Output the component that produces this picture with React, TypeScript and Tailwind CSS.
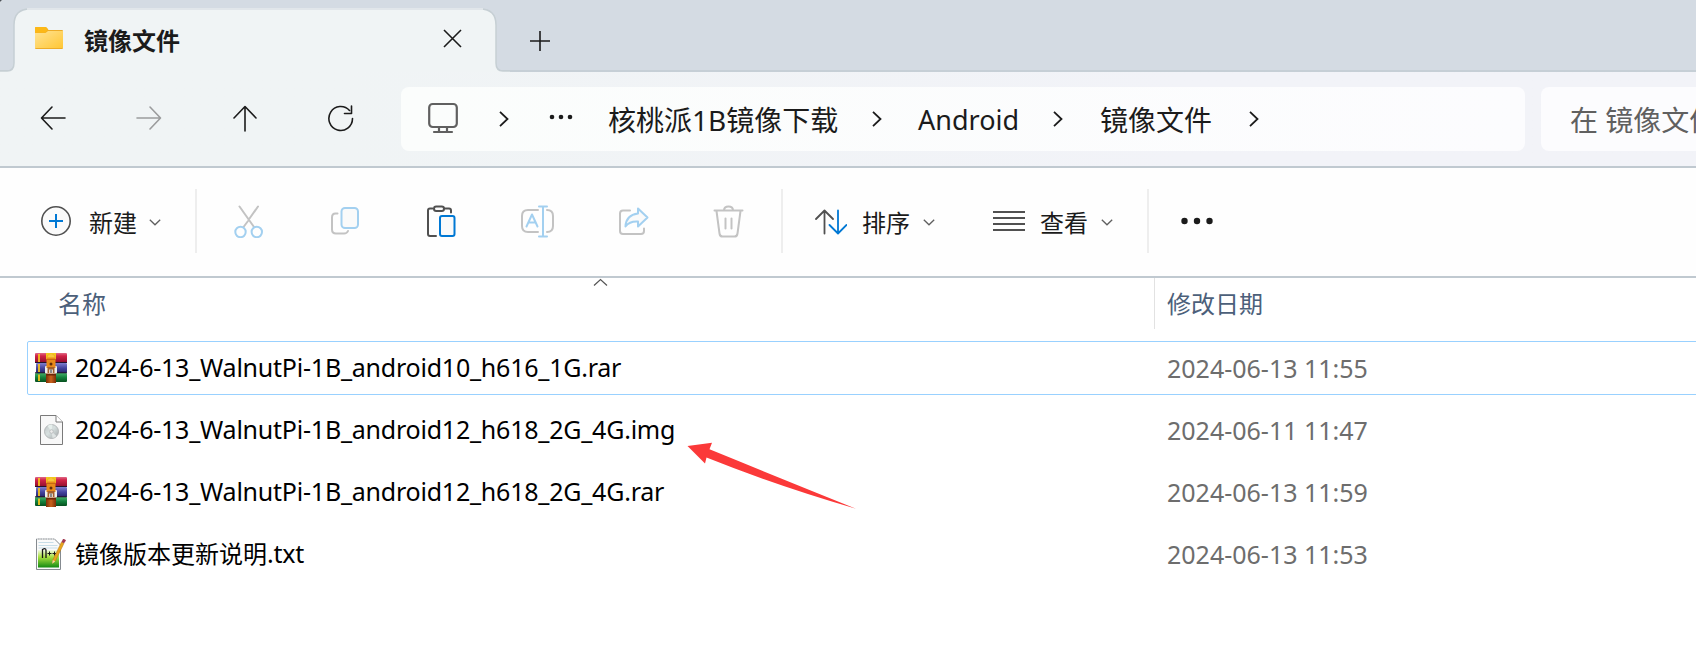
import type { ReactNode } from 'react';

const FONT = "font-['Noto_Sans','Noto_Sans_CJK_SC',sans-serif]";

type Row = { icon: 'rar' | 'img' | 'txt'; cjk?: string; name: string; date: string };

const rows: Row[] = [
  { icon: 'rar', name: '2024-6-13_WalnutPi-1B_android10_h616_1G.rar', date: '2024-06-13 11:55' },
  { icon: 'img', name: '2024-6-13_WalnutPi-1B_android12_h618_2G_4G.img', date: '2024-06-11 11:47' },
  { icon: 'rar', name: '2024-6-13_WalnutPi-1B_android12_h618_2G_4G.rar', date: '2024-06-13 11:59' },
  { icon: 'txt', cjk: '镜像版本更新说明', name: '.txt', date: '2024-06-13 11:53' },
];

function Chevron() {
  return (
    <svg className="shrink-0" width="10" height="16" viewBox="0 0 10 16" fill="none" stroke="#1b1b1b" strokeWidth="1.8">
      <path d="M1 .8 8.5 8 1 15.2" />
    </svg>
  );
}

function Down({ className }: { className: string }) {
  return (
    <svg className={className} width="12" height="7" viewBox="0 0 12 7" fill="none" stroke="#606060" strokeWidth="1.3">
      <path d="m.8.8 5.2 5 5.2-5" />
    </svg>
  );
}

function NavButton({ children, dim }: { children: ReactNode; dim?: boolean }) {
  return (
    <button className="flex h-14 w-24 shrink-0 items-center justify-center pb-0.5">
      <svg width="28" height="28" viewBox="0 0 28 28" fill="none" stroke={dim ? '#9b9c9d' : '#1b1b1b'} strokeWidth="1.6" strokeLinecap="round" strokeLinejoin="round">
        {children}
      </svg>
    </button>
  );
}

function Tool({ children }: { children: ReactNode }) {
  return (
    <button className="flex h-16 w-24 items-center justify-center pb-0.5">
      <svg width="34" height="34" viewBox="0 0 34 34" fill="none" strokeWidth="2" strokeLinecap="round" strokeLinejoin="round">
        {children}
      </svg>
    </button>
  );
}

function Divider() {
  return <div className="-mt-0.5 h-16 w-0.5 shrink-0 bg-[#eeeeee]" />;
}

function RarIcon() {
  return (
    <svg width="32" height="32" viewBox="0 0 32 32">
      <defs>
        <linearGradient id="rr" x2="0" y2="1"><stop offset="0" stopColor="#e06a86" /><stop offset=".3" stopColor="#d02348" /><stop offset="1" stopColor="#8c0c2c" /></linearGradient>
        <linearGradient id="rb" x2="0" y2="1"><stop offset="0" stopColor="#7f7fd0" /><stop offset=".5" stopColor="#4545a0" /><stop offset="1" stopColor="#25256c" /></linearGradient>
        <linearGradient id="rg" x2="0" y2="1"><stop offset="0" stopColor="#46b06a" /><stop offset=".5" stopColor="#13803c" /><stop offset="1" stopColor="#07501f" /></linearGradient>
        <linearGradient id="rs"><stop offset="0" stopColor="#7c2f08" /><stop offset=".5" stopColor="#c9621c" /><stop offset="1" stopColor="#7c2f08" /></linearGradient>
      </defs>
      <rect y="1" width="32" height="10" rx="1" fill="url(#rr)" />
      <rect x="1" y="11" width="31" height="10" rx="1" fill="url(#rb)" />
      <rect y="21" width="32" height="9" rx="1" fill="url(#rg)" />
      <path d="M0 10.500h32M0 20.800h32" stroke="#24122c" strokeWidth="1" />
      <path d="M4 2v8M4 12v8M4 22.500v6.500" stroke="#f5c21c" strokeWidth="1.800" />
      <rect x="11" y="1" width="10" height="6" fill="#f0c81c" />
      <rect x="11" y="21" width="10" height="10" fill="url(#rs)" />
      <path d="M11 22h10v1.500H11z" fill="#6c2708" />
      <rect x="10" y="14" width="12" height="7.500" rx="1" fill="#f0f0ee" />
      <path d="M11.500 16V6.500c0-6 9-6 9 0V16z" fill="#e98a1a" />
      <path d="M12 5.500q1-3.500 4-3.500t4 3.500z" fill="#f8c83a" />
      <path d="M11.500 7.500h9" stroke="#c56a10" strokeWidth="1" />
      <circle cx="16" cy="12" r="1.500" fill="#5f2c0c" />
      <path d="M12.500 15h7v6h-1.700v-3.500h-3.600V21h-1.700z" fill="#a5602c" />
      <path d="M16 17.500v3.500" stroke="#555" strokeWidth="1.300" />
    </svg>
  );
}

function ImgIcon() {
  return (
    <svg width="32" height="32" viewBox="0 0 32 32">
      <defs>
        <linearGradient id="disc" x2="1" y2="1"><stop offset="0" stopColor="#c0c4c6" /><stop offset=".45" stopColor="#d7e0df" /><stop offset="1" stopColor="#a3a7aa" /></linearGradient>
      </defs>
      <path d="M5.500 1.500h15.500l6.500 6.500v22.500h-22z" fill="#f8f8f8" stroke="#7a7a7a" />
      <path d="M21 1.500V8h6.500" fill="#fff" stroke="#7a7a7a" />
      <circle cx="16.500" cy="17.500" r="7" fill="url(#disc)" stroke="#a9adaf" strokeWidth=".8" />
      <path d="m16.500 17.500-4-5.500q3-2 5-1.300z" fill="#e6efec" />
      <path d="m16.500 17.500 5 4.500q-2 2-4 2z" fill="#dfe4e4" />
      <circle cx="16.500" cy="17.500" r="1.800" fill="#ececec" stroke="#b5b8ba" strokeWidth=".8" />
    </svg>
  );
}

function TxtIcon() {
  return (
    <svg width="32" height="32" viewBox="0 0 32 32">
      <defs>
        <linearGradient id="np" x2="0" y2="1"><stop offset="0" stopColor="#f4fbe4" /><stop offset=".4" stopColor="#a8e040" /><stop offset="1" stopColor="#128a12" /></linearGradient>
      </defs>
      <path d="M1.500 1h18l6 6v24.500h-24z" fill="#fafafa" stroke="#858b90" />
      <path d="M2 1h18" stroke="#fff" strokeDasharray="1 1.500" />
      <path d="M3.500 4.500h15M3.500 7.500h19M3.500 10h19" stroke="#c7dde8" />
      <rect x="3" y="12" width="21" height="17.500" fill="url(#np)" />
      <path d="M7.500 20v-8.500q3.500-2 3.500 1V20" fill="none" stroke="#161616" strokeWidth="1.300" />
      <path d="M12.500 15.500h4M14.500 13.500v4M17.500 15.500h4M19.500 13.500v4" stroke="#161616" strokeWidth="1" />
      <path d="m18 21.500 8.500-17.500 2.500 1.300-8.500 17.500-3 2.500z" fill="#e8a51c" stroke="#b0751a" strokeWidth=".5" />
      <path d="m26.500 4 1.500-3q2-.5 3 1.500L29 5.300z" fill="#a23a52" />
      <path d="m17.800 22-.6 3.700 3-2.100z" fill="#f5d9a0" />
    </svg>
  );
}

export default function App() {
  return (
    <div className="h-[661px] w-[1696px] overflow-hidden bg-[#4b5259]">
      <div className={`relative flex h-full flex-col overflow-hidden rounded-tl-[4px] bg-white ${FONT}`}>
        {/* Tab strip */}
        <header className="relative flex h-[72px] shrink-0 border-b-2 border-[#c6cfd6] bg-[#d4dbe3]">
          <svg className="absolute top-0 left-0" width="510" height="72" viewBox="0 0 510 72" fill="none">
            <path d="M0 72v-1h7q7 0 7-8V25Q14 9 30 9h450q16 0 16 16v38q0 8 7 8h7v1z" fill="#f0f4f5" />
            <path d="M0 71h7q7 0 7-8V25Q14 9 30 9h450q16 0 16 16v38q0 8 7 8h7" stroke="#c6cfd4" strokeWidth="1.500" />
            <path d="M27 9h456" stroke="#e1e6ea" strokeWidth="2" />
          </svg>
          <div className="relative flex h-full w-[496px] items-center pt-[11px] pl-[34px]">
            <svg className="-mt-1.5" width="30" height="26" viewBox="0 0 30 26">
              <defs>
                <linearGradient id="fold" x2="1" y2="1"><stop offset="0" stopColor="#ffe394" /><stop offset="1" stopColor="#ffc735" /></linearGradient>
              </defs>
              <path d="M1 3q0-1 1-1h9q1 0 2 1l1.500 2H28q1 0 1 1v17q0 1-1 1H2q-1 0-1-1z" fill="#edac28" />
              <path d="M1 3q0-1 1-1h9q1 0 2 1l1 2-2.500 2.700H1z" fill="#fcb817" />
              <path d="M1 8h10.500L14 6h15v17H1z" fill="url(#fold)" />
            </svg>
            <span className="ml-[20px] text-2xl leading-8 font-bold text-[#1b1b1b]">镜像文件</span>
            <svg className="-mt-1 mr-[34px] ml-auto" width="19" height="19" viewBox="0 0 19 19" stroke="#1b1b1b" strokeWidth="1.600">
              <path d="m1 1 17 17M18 1 1 18" />
            </svg>
          </div>
          <svg className="relative mt-[31px] ml-[34px]" width="20" height="20" viewBox="0 0 20 20" stroke="#1b1b1b" strokeWidth="1.600">
            <path d="M10 0v20M0 10h20" />
          </svg>
        </header>

        {/* Navigation */}
        <nav className="flex h-24 shrink-0 items-center border-b-2 border-[#c0c9d0] bg-linear-to-r from-[#f0f4f5] from-20% to-[#f2f3f8] to-70% pl-[5px]">
          <NavButton><path d="M26 14H3M13 3 2.500 14 13 25" /></NavButton>
          <NavButton dim><path d="M2 14h23M15 3l10.500 11L15 25" /></NavButton>
          <NavButton><path d="M14 27V3M3 14 14 2.500 25 14" /></NavButton>
          <NavButton><path d="M25.500 14.500A11.800 12 0 1 1 22.500 6.500M24.500 2v7.500H17.500" /></NavButton>
          <div className="ml-3 flex h-16 w-[1124px] shrink-0 items-center rounded-lg bg-linear-to-r from-[#fbfdfc] to-[#fcfcfe] pl-[27px]">
            <svg className="-mt-0.5" width="30" height="32" viewBox="0 0 30 32" fill="none" stroke="#606060" strokeWidth="2.200" strokeLinecap="round">
              <rect x="1.200" y="2" width="27.600" height="23" rx="3.500" />
              <path d="M11 25.500v4M19 25.500v4M6 30h18" />
            </svg>
            <div className="ml-[41px]"><Chevron /></div>
            <svg className="-mt-1 ml-[40px]" width="24" height="6" viewBox="0 0 24 6" fill="#1b1b1b">
              <circle cx="3" cy="3" r="2.300" /><circle cx="12" cy="3" r="2.300" /><circle cx="21" cy="3" r="2.300" />
            </svg>
            <span className="ml-[35px] w-[230px] pt-0.5 text-[28px] leading-9 whitespace-nowrap text-[#1b1b1b]">核桃派1B镜像下载</span>
            <div className="ml-[34px]"><Chevron /></div>
            <span className="ml-[36px] w-[100px] pt-0.5 text-[27px] leading-9 text-[#1b1b1b]">Android</span>
            <div className="ml-[35px]"><Chevron /></div>
            <span className="ml-[37px] pt-0.5 text-[28px] leading-9 text-[#1b1b1b]">镜像文件</span>
            <div className="ml-[37px]"><Chevron /></div>
          </div>
          <div className="ml-4 flex h-16 w-[200px] shrink-0 items-center rounded-lg bg-[#fcfcfe] pl-[29px]">
            <span className="pt-0.5 text-[28px] leading-9 whitespace-nowrap text-[#606060]">在 镜像文件</span>
          </div>
        </nav>

        {/* Commands */}
        <div className="flex h-[110px] shrink-0 items-center border-b-2 border-[#c0c9d0] bg-[#fefefe]">
          <svg className="-mt-0.5 ml-[41px]" width="30" height="30" viewBox="0 0 30 30" fill="none">
            <circle cx="15" cy="15" r="14.200" fill="#fafafa" stroke="#505050" strokeWidth="1.600" />
            <path d="M15 8v14M8 15h14" stroke="#0078d4" strokeWidth="2" />
          </svg>
          <span className="ml-[18px] pt-0.5 text-2xl leading-8 text-[#1b1b1b]">新建</span>
          <Down className="ml-3" />
          <div className="ml-[34px]"><Divider /></div>
          <div className="ml-1 flex">
            <Tool>
              <path d="M7.500 2.500 22 23M26 2.500l-8.500 12M16 17l-4.500 6" stroke="#c3c3c3" />
              <circle cx="8.500" cy="28" r="5.200" stroke="#a3d0f0" /><circle cx="24.800" cy="28" r="5.200" stroke="#a3d0f0" />
            </Tool>
            <Tool>
              <path d="M9.500 9.500H7.500q-3.500 0-3.500 4v12q0 4 4 4h8q3 0 4-2.500" stroke="#c3c3c3" />
              <rect x="13.500" y="4" width="16.500" height="20" rx="3.500" fill="#fafafa" stroke="#a3d0f0" />
            </Tool>
            <Tool>
              <path d="M8.500 4.500H6q-2 0-2 2V30q0 2 2 2h6M19.500 4.500h5.500q2 0 2 2v2" stroke="#505050" />
              <rect x="10" y="2.500" width="10" height="4.500" rx="2.200" fill="#fafafa" stroke="#505050" />
              <rect x="16" y="12" width="14.500" height="20" rx="2" fill="#fafafa" stroke="#0078d4" />
            </Tool>
            <Tool>
              <path d="M18 6H8Q2 6 2 12v10q0 6 6 6h10M27 6q6 0 6 6v10q0 6-6 6" stroke="#c3c3c3" />
              <path d="M6.500 22.500 12 10.500l5.500 12M8.500 18.500h7M19 2.500h8M23 2.500v30M19 32.500h8" stroke="#a3d0f0" />
            </Tool>
            <Tool>
              <path d="M14 6.500H7q-3 0-3 3V27q0 3 3 3h18q3 0 3-3v-2.500" stroke="#c3c3c3" />
              <path d="M22 4.500 31.500 13.500 22 22.500v-5q-8.500-.5-12.500 5Q10 11 22 9.500z" fill="#fafafa" stroke="#a3d0f0" />
            </Tool>
            <Tool>
              <path d="M2.500 6.500h28M4.500 7l3 22.500q.4 3 3 3h12q2.600 0 3-3l3-22.500M12 6.500q0-4 4.500-4t4.500 4M13.500 14.500v10M19.500 14.500v10" stroke="#c3c3c3" />
            </Tool>
          </div>
          <div className="ml-1"><Divider /></div>
          <svg className="ml-8" width="32" height="26" viewBox="0 0 32 26" fill="none" strokeWidth="1.800" strokeLinecap="round" strokeLinejoin="round">
            <path d="M9.500 24.500V2M1 10 9.500 1.500 18 10" stroke="#505050" />
            <path d="M23 1.500V24M14.500 16l8.500 8.500 8.500-8.500" stroke="#0078d4" />
          </svg>
          <span className="ml-[15px] pt-0.5 text-2xl leading-8 text-[#1b1b1b]">排序</span>
          <Down className="ml-[13px]" />
          <svg className="-mt-0.5 ml-[58px]" width="32" height="22" viewBox="0 0 32 22" stroke="#505050" strokeWidth="2">
            <path d="M0 2h32M0 8h32M0 14h32M0 20h32" />
          </svg>
          <span className="ml-[15px] pt-0.5 text-2xl leading-8 text-[#1b1b1b]">查看</span>
          <Down className="ml-[13px]" />
          <div className="ml-[34px]"><Divider /></div>
          <svg className="-mt-0.5 ml-8" width="32" height="8" viewBox="0 0 32 8" fill="#1b1b1b">
            <circle cx="3.500" cy="4" r="3.200" /><circle cx="16" cy="4" r="3.200" /><circle cx="28.500" cy="4" r="3.200" />
          </svg>
        </div>

        {/* Column headings */}
        <div className="relative flex h-[51px] shrink-0 text-2xl leading-8 text-[#4c607a]">
          <div className="w-[1155px] border-r border-[#e2e2e2] pt-[10px] pl-[58px]">名称</div>
          <div className="pt-[10px] pl-3">修改日期</div>
          <svg className="absolute top-0 left-[593px]" width="15" height="8" viewBox="0 0 15 8" fill="none" stroke="#555" strokeWidth="1.200">
            <path d="m1 7.500 6.500-6 6.500 6" />
          </svg>
        </div>

        {/* Files */}
        <main className="mt-3 flex flex-col gap-2 pl-[27px]">
          {rows.map((row, i) => (
            <div
              key={row.date}
              className={`flex h-[54px] w-[1700px] items-center rounded-[2px] border ${i === 0 ? 'border-[#99d1ff]' : 'border-transparent'}`}
            >
              <div className="ml-[7px] w-8">{row.icon === 'rar' ? <RarIcon /> : row.icon === 'img' ? <ImgIcon /> : <TxtIcon />}</div>
              <div className="ml-2 w-[1092px] pb-px text-2xl leading-8 text-black">
                {row.cjk}
                <span className="text-[25px] tracking-[-0.225px]">{row.name}</span>
              </div>
              <div className="pb-px text-[25px] leading-8 text-[#6d6d6d]">{row.date}</div>
            </div>
          ))}
        </main>

        {/* Pointer over the image file */}
        <svg className="absolute top-[440px] left-[685px]" width="175" height="72" viewBox="0 0 175 72" fill="#fb3939">
          <path d="m2.500 6 24.500-3.200-2.500 6.500Q95 38 171 68.700 90 45 21.500 17.500L20 23.500z" />
        </svg>
      </div>
    </div>
  );
}
